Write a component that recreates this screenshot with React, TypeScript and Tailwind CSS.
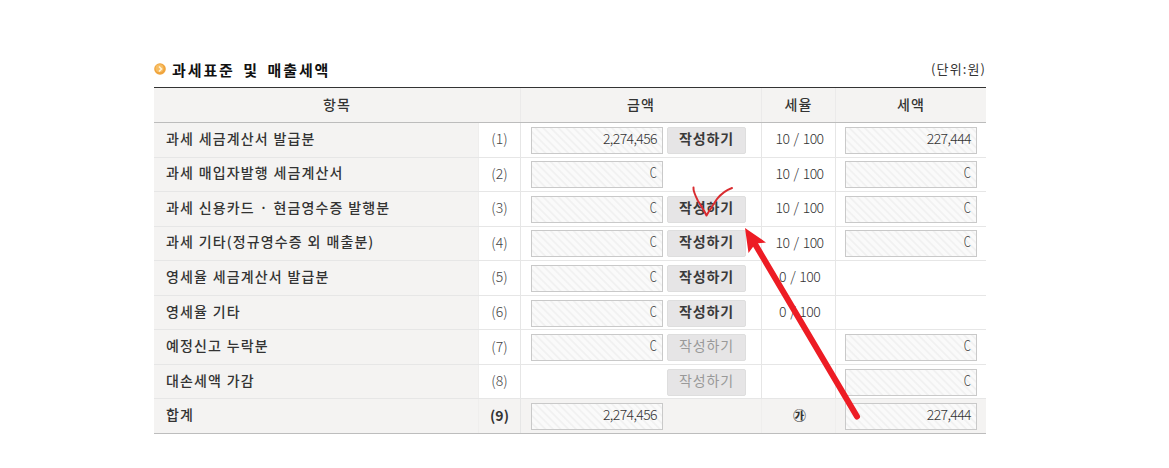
import clsx from 'clsx';

type Row = {
  label: string;
  no: number;
  amount?: string;
  button?: 'on' | 'off';
  rate?: string;
  tax?: string;
};

const rows: Row[] = [
  { label: '과세 세금계산서 발급분', no: 1, amount: '2,274,456', button: 'on', rate: '10 / 100', tax: '227,444' },
  { label: '과세 매입자발행 세금계산서', no: 2, amount: 'C', rate: '10 / 100', tax: 'C' },
  { label: '과세 신용카드 · 현금영수증 발행분', no: 3, amount: 'C', button: 'on', rate: '10 / 100', tax: 'C' },
  { label: '과세 기타(정규영수증 외 매출분)', no: 4, amount: 'C', button: 'on', rate: '10 / 100', tax: 'C' },
  { label: '영세율 세금계산서 발급분', no: 5, amount: 'C', button: 'on', rate: '0 / 100' },
  { label: '영세율 기타', no: 6, amount: 'C', button: 'on', rate: '0 / 100' },
  { label: '예정신고 누락분', no: 7, amount: 'C', button: 'off', tax: 'C' },
  { label: '대손세액 가감', no: 8, button: 'off', tax: 'C' },
  { label: '합계', no: 9, amount: '2,274,456', rate: '㉮', tax: '227,444' },
];

const columns = 'grid grid-cols-[325px_42px_241px_74px_150px]';

function Field({ value }: { value: string }) {
  return (
    <div className="h-[27px] w-[132px] shrink-0 border border-[#c9c9c9] bg-[repeating-linear-gradient(45deg,#fafafa_0px,#fafafa_2.6px,#f1f1f1_3.6px,#f1f1f1_4.4px,#fafafa_5.4px)] pr-[5px] text-right text-[14px] leading-[20px] font-light tracking-[-0.6px] text-[#333]">
      {value === 'C' ? <span className="inline-block scale-x-80">{value}</span> : value}
    </div>
  );
}

function WriteButton({ disabled }: { disabled: boolean }) {
  return (
    <button
      disabled={disabled}
      className={clsx(
        'h-[27px] w-[79px] shrink-0 rounded-[2px] border border-[#dedede] bg-[#e6e5e6] pb-[4px] text-[14px] leading-[21px] tracking-[0.9px]',
        disabled ? 'font-normal text-[#999]' : 'font-bold text-[#3a3a3a]'
      )}
    >
      작성하기
    </button>
  );
}

function TableRow({ row }: { row: Row }) {
  const total = row.no === 9;
  return (
    <div
      className={clsx(
        columns,
        'h-[34.55px] border-b',
        total ? 'border-[#bdbdbd] bg-[#f4f3f2]' : 'border-[#e6e6e6]'
      )}
    >
      <div className="flex items-center border-r border-[#efeeed] bg-[#f4f3f2] pb-[3px] pl-[12px] text-[14px] font-medium tracking-[1.1px] whitespace-nowrap text-[#333] [word-spacing:0.6px]">
        {row.label}
      </div>
      <div
        className={clsx(
          'flex items-center justify-center border-r border-[#e6e6e6] pb-[2px]',
          total ? 'text-[14px] font-bold text-[#333]' : 'text-[14px] font-light text-[#444]'
        )}
      >
        ({row.no})
      </div>
      <div
        className={clsx(
          'flex items-center gap-[4px] border-r pt-[1px] pl-[10px]',
          total ? 'border-[#efeeed]' : 'border-[#e6e6e6]'
        )}
      >
        {row.amount ? <Field value={row.amount} /> : <div className="w-[132px]" />}
        {row.button && <WriteButton disabled={row.button === 'off'} />}
      </div>
      <div
        className={clsx(
          'flex items-center justify-center border-r pb-[2px] pl-[2px] whitespace-pre text-[#333]',
          total
            ? 'border-[#efeeed] text-[13px] font-bold'
            : 'border-[#e6e6e6] text-[14px] font-light tracking-[-0.6px] [word-spacing:1.8px]'
        )}
      >
        {row.rate}
      </div>
      <div className="flex items-center pt-[1px] pl-[9px]">{row.tax && <Field value={row.tax} />}</div>
    </div>
  );
}

function Annotations() {
  return (
    <svg className="pointer-events-none absolute inset-0" width="1169" height="468" viewBox="0 0 1169 468" fill="none">
      <path
        d="M693.5 187.5C693 191 695 195 698 201C701 206 704 210 706.5 215.5C709 211 713 205 717 199C721 194 725 190.5 732 188"
        stroke="#d92c30"
        strokeWidth="2"
        strokeLinecap="round"
        strokeLinejoin="round"
      />
      <path d="M857 416.5L755 244" stroke="#ed1c24" strokeWidth="6" strokeLinecap="round" />
      <path d="M745 228L766 242.5L755.5 243.5L748.5 253Z" fill="#ed1c24" />
    </svg>
  );
}

export default function App() {
  return (
    <div className="relative h-[468px] w-[1169px] overflow-hidden bg-white font-['Noto_Sans_CJK_KR',sans-serif]">
      <div className="ml-[154px] w-[832px] pt-[54px]">
        <div className="flex h-[33px] items-center justify-between">
          <h2 className="flex items-center gap-[6px] text-[15px] font-bold tracking-[1.9px] text-[#111] [word-spacing:3.2px]">
            <svg className="mb-[3px]" width="12" height="12" viewBox="0 0 12 12" fill="none">
              <circle cx="6" cy="6" r="5.8" fill="#f0a43c" />
              <circle cx="5.5" cy="5.3" r="4" fill="#f7bd62" />
              <path d="M5 3.5L7.5 6L5 8.5" stroke="#fff3d8" strokeWidth="1.6" />
            </svg>
            과세표준 및 매출세액
          </h2>
          <span className="pb-[4px] text-[13px] tracking-[1.1px] text-[#333]">(단위:원)</span>
        </div>

        <div className="grid h-[36px] grid-cols-[367px_241px_74px_150px] border-t border-b border-t-[#333] border-b-[#bcbcbc] bg-[#f4f3f2] text-center text-[14px] leading-[33px] font-medium tracking-[1px] text-[#333]">
          <div className="border-r border-[#ebeaea]">항목</div>
          <div className="border-r border-[#ebeaea]">금액</div>
          <div className="border-r border-[#ebeaea]">세율</div>
          <div>세액</div>
        </div>
        {rows.map((row) => (
          <TableRow key={row.no} row={row} />
        ))}
      </div>
      <Annotations />
    </div>
  );
}
